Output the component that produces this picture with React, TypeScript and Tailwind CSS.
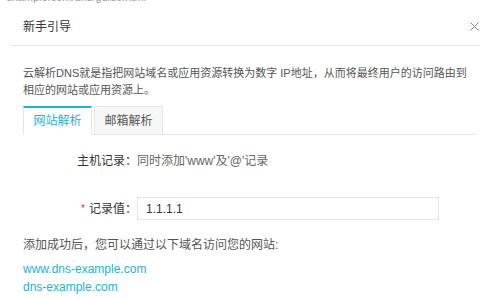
import React from 'react'

const font = { fontFamily: '"Liberation Sans", "Noto Sans CJK SC", sans-serif' }

export default function App() {
  return (
    <div className="w-[480px] h-[300px] overflow-hidden bg-white text-[#333]" style={font}>
      {/* page behind the dialog, cut off at the top */}
      <div className="h-[3px] overflow-hidden flex items-end pl-[6px]">
        <span className="text-[11px] leading-[11px] text-[#999] whitespace-nowrap">example.com/dns/guide.html</span>
      </div>

      <div className="flex items-center justify-between h-[43px] pt-[5px] pl-[12px] pr-[1px] ml-[11px] border-b border-[#e6e6e6]">
        <h1 className="text-[12px] text-[#333] font-normal">新手引导</h1>
        <svg width="9" height="9" viewBox="0 0 9 9">
          <path d="M0.5 0.5 L8.5 8.5 M8.5 0.5 L0.5 8.5" stroke="#888" strokeWidth="1" fill="none" />
        </svg>
      </div>

      <div className="pl-[23px] pr-[3px]">
        <p className="mt-[19px] w-[450px] text-[11px] leading-[17px] text-[#555]">
          云解析DNS就是指把网站域名或应用资源转换为数字 IP地址，从而将最终用户的访问路由到
          <br />
          相应的网站或应用资源上。
        </p>

        <div className="mt-[7px] flex items-end gap-[2px] border-b border-[#e6e6e6] h-[29px]">
          <div className="-mb-px w-[69px] h-[29px] flex items-center justify-center border border-[#e6e6e6] border-t-2 border-t-[#1fb1d6] border-b-white bg-white text-[12px] text-[#1fb1d6]">
            网站解析
          </div>
          <div className="w-[69px] h-[28px] flex items-center justify-center border border-[#e6e6e6] border-b-0 bg-[#f7f7f7] text-[12px] text-[#555]">
            邮箱解析
          </div>
        </div>

        <div className="mt-[17px] flex items-center h-[18px] text-[12px]">
          <span className="w-[114px] text-right text-[#333]">主机记录：</span>
          <span className="text-[#666]">同时添加'www'及'@'记录</span>
        </div>

        <div className="mt-[27px] flex items-center text-[12px]">
          <span className="w-[114px] flex justify-end items-center text-[#333]">
            <span className="text-[#e4393c] text-[10px] mr-[4px]">*</span>记录值：
          </span>
          <div className="w-[302px] h-[23px] border border-[#e3e3e3] flex items-center pl-[8px] text-[12px] text-[#333]">
            1.1.1.1
          </div>
        </div>

        <p className="mt-[16px] text-[12px] leading-[18px] text-[#555]">添加成功后，您可以通过以下域名访问您的网站:</p>
        <div className="mt-[6px] flex flex-col text-[12px] leading-[18px] text-[#1fb1d6]">
          <a>www.dns-example.com</a>
          <a>dns-example.com</a>
        </div>
      </div>
    </div>
  )
}
